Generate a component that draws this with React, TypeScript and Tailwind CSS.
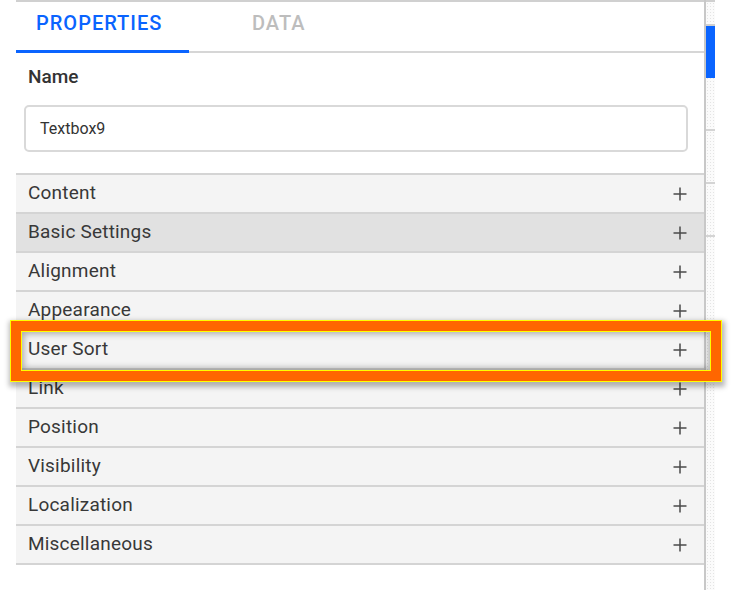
import React from "react";

const sections = [
  "Content",
  "Basic Settings",
  "Alignment",
  "Appearance",
  "User Sort",
  "Link",
  "Position",
  "Visibility",
  "Localization",
  "Miscellaneous",
];

function PlusIcon() {
  return (
    <svg width="14" height="14" viewBox="0 0 14 14" className="text-[#4a4a4a]">
      <path d="M7 0.5V13.5M0.5 7H13.5" stroke="currentColor" strokeWidth="1.5" fill="none" />
    </svg>
  );
}

export default function App() {
  return (
    <div
      className="relative flex w-[731px] h-[590px] bg-white overflow-hidden"
      style={{ fontFamily: "Roboto, 'Liberation Sans', sans-serif" }}
    >
      {/* left gutter */}
      <div className="w-[16px] shrink-0" />

      {/* properties panel */}
      <div className="w-[688px] shrink-0 flex flex-col border-t-2 border-[#d0d0d0]">
        {/* tabs */}
        <div className="flex h-[51px] border-b-2 border-[#d6d6d6]">
          <div className="w-[173px] h-[51px] -mb-[2px] border-b-[3px] border-[#0a64ff] pl-[20px] pt-[9px]">
            <span className="text-[20px] leading-[24px] font-medium tracking-[1px] text-[#0a64ff]">PROPERTIES</span>
          </div>
          <div className="pl-[63px] pt-[9px]">
            <span className="text-[20px] leading-[24px] font-medium tracking-[1px] text-[#bdbdbd]">DATA</span>
          </div>
        </div>

        {/* name field */}
        <div className="pt-[12px] pl-3 text-[19px] leading-[24px] font-medium text-[#333]">Name</div>
        <div className="mt-[16px] ml-2 mr-4 h-[47px] border-2 border-[#d9d9d9] rounded-[5px] flex items-center pl-[14px] text-[16px] text-[#333]">
          Textbox9
        </div>

        {/* accordion rows */}
        <div className="mt-[21px] flex flex-col border-b-2 border-[#d4d4d4]">
          {sections.map((name) => (
            <div
              key={name}
              className={`h-[39px] border-t-2 border-[#d4d4d4] flex items-center justify-between pl-3 pr-[17px] ${
                name === "Basic Settings" ? "bg-[#e1e1e1]" : "bg-[#f4f4f4]"
              }`}
            >
              <span className="text-[19px] tracking-[0.2px] text-[#383838]">{name}</span>
              <PlusIcon />
            </div>
          ))}
        </div>
      </div>

      {/* divider */}
      <div className="w-[2px] shrink-0 bg-[#c8c8c8]" />

      {/* scroll track */}
      <div className="w-[9px] shrink-0 flex flex-col border-t-2 border-[#d0d0d0] bg-[#fbfbfb] bg-[radial-gradient(#e4e4e4_1px,transparent_1px)] bg-[length:3px_3px]">
        <div className="h-[22px]" />
        <div className="h-[2px] bg-[#d0d0d0]" />
        <div className="h-[52px] bg-[#0a64ff]" />
        <div className="h-[51px]" />
        <div className="h-[2px] bg-[#d4d4d4]" />
        <div className="h-[51px]" />
        <div className="h-[2px] bg-[#d4d4d4]" />
        <div className="h-[51px]" />
        <div className="h-[2px] bg-[#d4d4d4]" />
      </div>

      <div className="flex-1" />

      {/* highlight callout over "User Sort" */}
      <div className="absolute left-[10px] top-[320px] w-[712px] h-[62px] border border-[#ffff00] shadow-[1px_3px_5px_2px_rgba(0,0,0,0.28)]">
        <div className="w-full h-full border-[10px] border-[#ff6600]">
          <div className="w-full h-full border border-[#ffff00] shadow-[inset_0_0_6px_2px_rgba(0,0,0,0.3)]" />
        </div>
      </div>
    </div>
  );
}
